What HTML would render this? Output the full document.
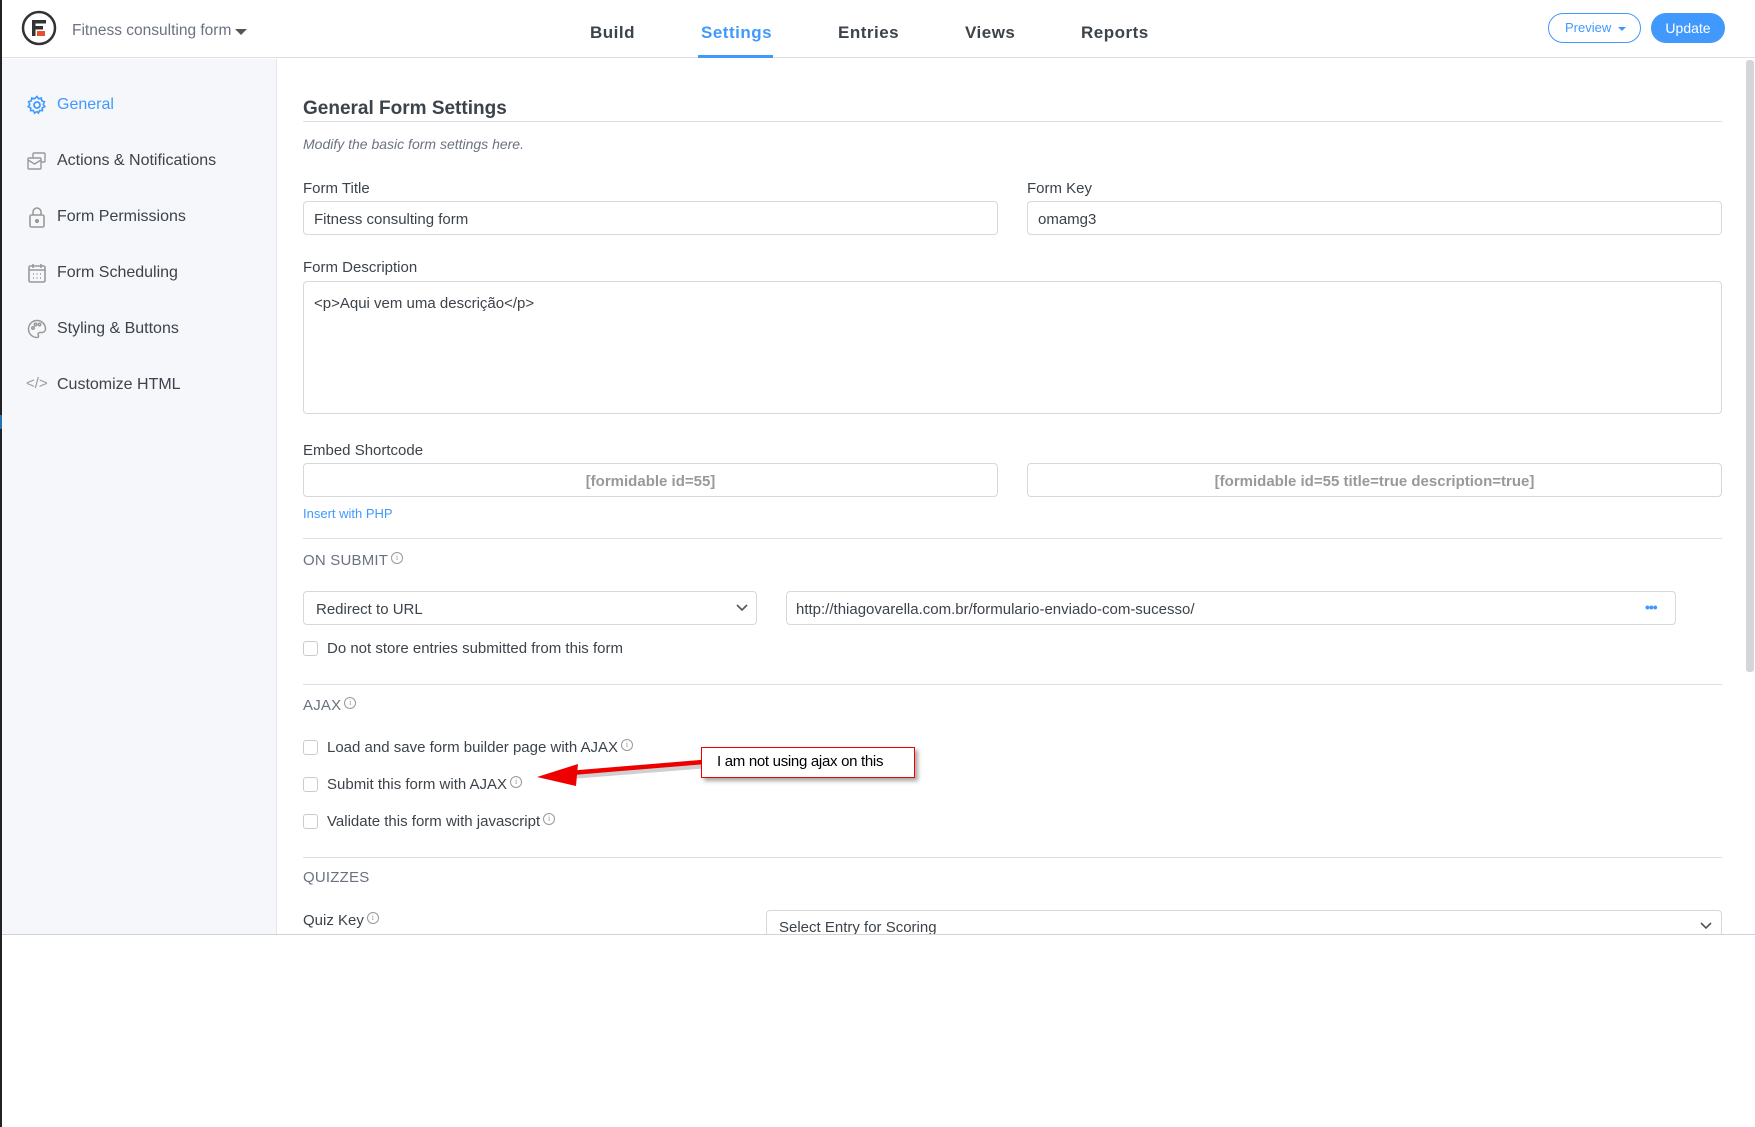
<!DOCTYPE html>
<html><head><meta charset="utf-8"><style>
*{box-sizing:border-box;margin:0;padding:0}
body{width:1755px;height:1127px;background:#fff;font-family:"Liberation Sans",sans-serif;color:#3c434a;position:relative;overflow:hidden}
.a{position:absolute;white-space:nowrap}
.inp{position:absolute;border:1px solid #d5d8dc;border-radius:4px;background:#fff}
.lbl{position:absolute;font-size:15px;color:#3c434a;white-space:nowrap}
.hr{position:absolute;left:303px;width:1419px;height:1px;background:#dcdfe3}
.cb{position:absolute;left:303px;width:15px;height:15px;border:1px solid #c8ccd0;border-radius:3px;background:#fff}
.sec{position:absolute;left:303px;font-size:15px;color:#6b7280;letter-spacing:.2px}
.info{display:inline-block;width:12px;height:12px;border:1px solid #999;border-radius:50%;font-size:8px;line-height:10px;text-align:center;color:#999;vertical-align:top;margin-left:3px;font-family:serif}
.side{position:absolute;left:57px;font-size:16px;color:#3c434a}
</style></head><body>
<div class="a" style="left:0;top:0;width:2px;height:1127px;background:#222"></div>
<div class="a" style="left:0;top:415px;width:2px;height:14px;background:#2271b1"></div>
<div class="a" style="left:2px;top:0;width:1753px;height:58px;background:#fff;border-bottom:1px solid #dcdfe3"></div>
<svg class="a" style="left:21px;top:10px" width="36" height="36" viewBox="0 0 36 36"><circle cx="18" cy="18" r="16" fill="none" stroke="#333" stroke-width="2.5"/><rect x="11" y="10" width="14" height="3.5" fill="#333"/><rect x="11" y="16" width="11" height="3.5" fill="#333"/><rect x="11" y="10" width="3.5" height="16" fill="#333"/><rect x="16" y="21" width="8" height="5" fill="#e8512e"/></svg>
<div class="a" style="left:72px;top:22px;font-size:15.5px;color:#6b7280">Fitness consulting form</div>
<div class="a" style="left:235px;top:29px;width:0;height:0;border-left:6px solid transparent;border-right:6px solid transparent;border-top:6px solid #555"></div>
<div class="a" style="left:590px;top:23px;font-size:17px;font-weight:bold;color:#3c434a;letter-spacing:.5px">Build</div>
<div class="a" style="left:701px;top:23px;font-size:17px;font-weight:bold;color:#4199fd;letter-spacing:.5px">Settings</div>
<div class="a" style="left:698px;top:55px;width:75px;height:3px;background:#4199fd"></div>
<div class="a" style="left:838px;top:23px;font-size:17px;font-weight:bold;color:#3c434a;letter-spacing:.5px">Entries</div>
<div class="a" style="left:965px;top:23px;font-size:17px;font-weight:bold;color:#3c434a;letter-spacing:.5px">Views</div>
<div class="a" style="left:1081px;top:23px;font-size:17px;font-weight:bold;color:#3c434a;letter-spacing:.5px">Reports</div>
<div class="a" style="left:1548px;top:13px;width:93px;height:30px;border:1px solid #4199fd;border-radius:15px;color:#4199fd;font-size:13px;line-height:28px;padding-left:16px">Preview <span style="display:inline-block;border-left:4px solid transparent;border-right:4px solid transparent;border-top:4px solid #4199fd;vertical-align:middle;margin-left:3px"></span></div>
<div class="a" style="left:1651px;top:13px;width:74px;height:30px;border-radius:15px;background:#4199fd;color:#fff;font-size:14px;line-height:30px;text-align:center">Update</div>
<div class="a" style="left:2px;top:59px;width:275px;height:875px;background:#f5f7fb;border-right:1px solid #e5e7eb"></div>
<svg class="a" style="left:27px;top:95px" width="20" height="20" viewBox="0 0 20 20"><circle cx="10" cy="10" r="3" fill="none" stroke="#4199fd" stroke-width="1.8"/><path d="M10 1.5l1.6 2.3 2.7-.8.4 2.8 2.7 1-1.2 2.5 1.6 2.3-2.5 1.3.1 2.8-2.8-.2-1.1 2.6L10 16.6l-2.5 1.5-1.1-2.6-2.8.2.1-2.8-2.5-1.3 1.6-2.3-1.2-2.5 2.7-1 .4-2.8 2.7.8z" fill="none" stroke="#4199fd" stroke-width="1.6"/></svg>
<div class="side" style="top:96px;color:#4199fd">General</div>
<svg class="a" style="left:27px;top:151px" width="20" height="20" viewBox="0 0 20 20" fill="none" stroke="#999" stroke-width="1.4"><rect x="6" y="2" width="12" height="9" rx="1"/><rect x="1" y="7" width="13" height="11" rx="1" fill="#f5f7fb"/><path d="M1 9l6.5 4 6.5-4"/></svg>
<div class="side" style="top:152px">Actions &amp; Notifications</div>
<svg class="a" style="left:28px;top:206px" width="18" height="22" viewBox="0 0 18 22" fill="none" stroke="#999" stroke-width="1.6"><rect x="2" y="9" width="14" height="12" rx="1.5"/><path d="M5 9V6a4 4 0 0 1 8 0v3"/><circle cx="9" cy="15" r="1.3" fill="#999"/></svg>
<div class="side" style="top:208px">Form Permissions</div>
<svg class="a" style="left:28px;top:263px" width="18" height="20" viewBox="0 0 18 20" fill="none" stroke="#999" stroke-width="1.6"><rect x="1" y="3" width="16" height="16" rx="1.5"/><path d="M1 7h16M5 1v4M13 1v4"/><path d="M5 11h1M8.5 11h1M12 11h1M5 15h1M8.5 15h1M12 15h1" stroke-width="1.4"/></svg>
<div class="side" style="top:264px">Form Scheduling</div>
<svg class="a" style="left:27px;top:319px" width="20" height="20" viewBox="0 0 20 20" fill="none" stroke="#999" stroke-width="1.5"><path d="M10 1.5a8.5 8.5 0 1 0 0 17c1.5 0 2-1 1.3-2.2-.8-1.3 0-2.8 1.6-2.8h2.2a3.4 3.4 0 0 0 3.4-3.4C18.5 5.2 14.7 1.5 10 1.5z"/><circle cx="6" cy="9" r="1.2"/><circle cx="8.5" cy="5.5" r="1.2"/><circle cx="12.5" cy="5.5" r="1.2"/></svg>
<div class="side" style="top:320px">Styling &amp; Buttons</div>
<div class="a" style="left:26px;top:375px;font-size:15px;color:#999">&lt;/&gt;</div>
<div class="side" style="top:376px">Customize HTML</div>
<div class="a" style="left:1746px;top:60px;width:8px;height:612px;background:#d4d5d8;border-radius:3px"></div>
<div class="a" style="left:303px;top:98px;font-size:19px;font-weight:bold;color:#3c434a">General Form Settings</div>
<div class="hr" style="top:121px"></div>
<div class="a" style="left:303px;top:136px;font-size:14px;font-style:italic;color:#6b7280">Modify the basic form settings here.</div>
<div class="lbl" style="left:303px;top:180px">Form Title</div>
<div class="inp" style="left:303px;top:201px;width:695px;height:34px;font-size:15px;padding:9px 10px">Fitness consulting form</div>
<div class="lbl" style="left:1027px;top:180px">Form Key</div>
<div class="inp" style="left:1027px;top:201px;width:695px;height:34px;font-size:15px;padding:9px 10px">omamg3</div>
<div class="lbl" style="left:303px;top:259px">Form Description</div>
<div class="inp" style="left:303px;top:281px;width:1419px;height:133px;font-size:15px;padding:13px 10px">&lt;p&gt;Aqui vem uma descrição&lt;/p&gt;</div>
<div class="lbl" style="left:303px;top:442px">Embed Shortcode</div>
<div class="inp" style="left:303px;top:463px;width:695px;height:34px;font-size:15px;font-weight:bold;color:#999;text-align:center;padding-top:9px">[formidable id=55]</div>
<div class="inp" style="left:1027px;top:463px;width:695px;height:34px;font-size:15px;font-weight:bold;color:#999;text-align:center;padding-top:9px">[formidable id=55 title=true description=true]</div>
<div class="a" style="left:303px;top:506px;font-size:13px;color:#4199fd">Insert with PHP</div>
<div class="hr" style="top:538px"></div>
<div class="sec" style="top:552px">ON SUBMIT<span class="info">i</span></div>
<div class="inp" style="left:303px;top:591px;width:454px;height:34px;font-size:15px;padding:9px 12px">Redirect to URL</div>
<svg class="a" style="left:736px;top:604px" width="12" height="8" viewBox="0 0 12 8"><path d="M1 1l5 5 5-5" fill="none" stroke="#555" stroke-width="1.6"/></svg>
<div class="inp" style="left:786px;top:591px;width:890px;height:34px;font-size:15px;padding:9px 9px">http://thiagovarella.com.br/formulario-enviado-com-sucesso/</div>
<div class="a" style="left:1645px;top:599px;font-size:14px;color:#4199fd;font-weight:bold;letter-spacing:-1px">•••</div>
<div class="cb" style="top:641px"></div>
<div class="a" style="left:327px;top:640px;font-size:15px">Do not store entries submitted from this form</div>
<div class="hr" style="top:684px"></div>
<div class="sec" style="top:697px">AJAX<span class="info">i</span></div>
<div class="cb" style="top:740px"></div>
<div class="a" style="left:327px;top:739px;font-size:15px">Load and save form builder page with AJAX<span class="info">i</span></div>
<div class="cb" style="top:777px"></div>
<div class="a" style="left:327px;top:776px;font-size:15px">Submit this form with AJAX<span class="info">i</span></div>
<div class="cb" style="top:814px"></div>
<div class="a" style="left:327px;top:813px;font-size:15px">Validate this form with javascript<span class="info">i</span></div>
<div class="hr" style="top:857px"></div>
<div class="sec" style="top:869px">QUIZZES</div>
<div class="a" style="left:303px;top:912px;font-size:15px">Quiz Key<span class="info">i</span></div>
<div class="inp" style="left:766px;top:910px;width:956px;height:40px;font-size:15px;padding:8px 12px">Select Entry for Scoring</div>
<svg class="a" style="left:1700px;top:922px" width="12" height="8" viewBox="0 0 12 8"><path d="M1 1l5 5 5-5" fill="none" stroke="#555" stroke-width="1.6"/></svg>
<div class="a" style="left:2px;top:934px;width:1753px;height:193px;background:#fff;border-top:1px solid #d0d3d6"></div>
<svg class="a" style="left:530px;top:740px" width="200" height="50" viewBox="0 0 200 50"><path d="M171 23 L45 33" stroke="#777" stroke-width="5" opacity=".35" transform="translate(2,3)"/><path d="M173 22 L40 33" stroke="#e00" stroke-width="4.5"/><path d="M7 37 L48 24 L46 46 Z" fill="#e00"/></svg>
<div class="a" style="left:701px;top:747px;width:214px;height:31px;border:1.5px solid #e00;background:#fff;box-shadow:3px 3px 4px rgba(0,0,0,.35);font-size:15px;color:#000;line-height:28px;padding-left:15px;letter-spacing:-.3px">I am not using ajax on this</div>
</body></html>
